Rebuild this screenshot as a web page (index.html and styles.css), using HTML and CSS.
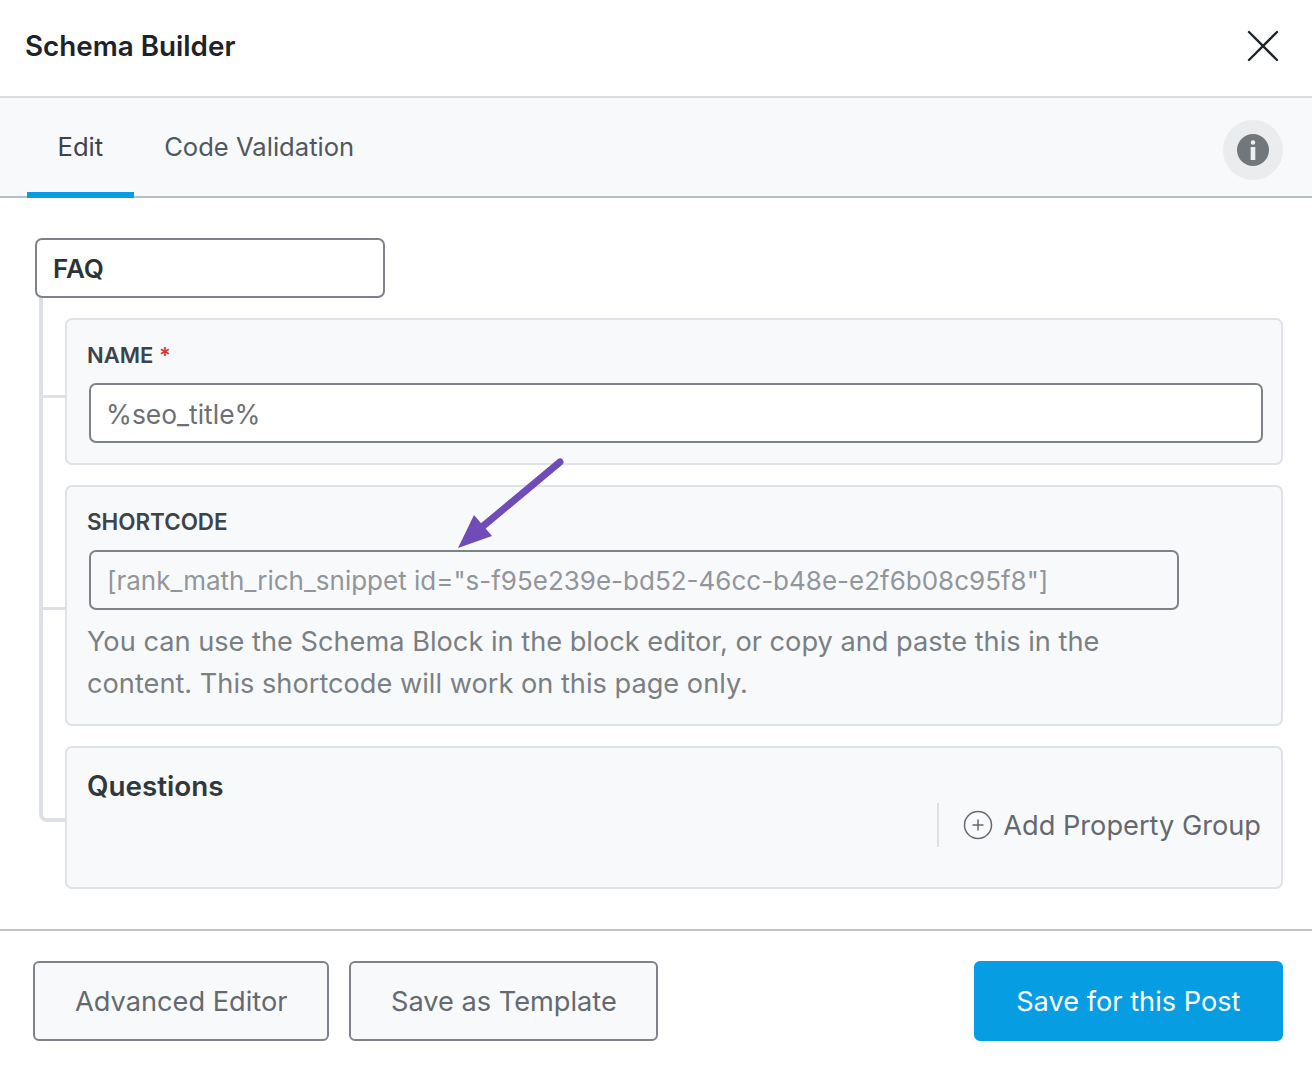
FILE: index.html
```html
<!DOCTYPE html>
<html lang="en">
<head>
<meta charset="utf-8">
<title>Schema Builder</title>
<link rel="stylesheet" href="styles.css">
</head>
<body>
<div class="modal">
  <header class="header">
    <h1 class="title">Schema Builder</h1>
    <button class="close" aria-label="Close">
      <svg width="32" height="32" viewBox="0 0 32 32"><path d="M2 2 L30 30 M30 2 L2 30" fill="none" stroke="#1d2327" stroke-width="2.4" stroke-linecap="round"/></svg>
    </button>
  </header>
  <nav class="tabs">
    <a class="tab tab-active">Edit</a>
    <a class="tab">Code Validation</a>
    <span class="info">
      <svg width="32" height="32" viewBox="0 0 32 32"><circle cx="16" cy="16" r="16" fill="#72777c"/><circle cx="16" cy="8.5" r="2.2" fill="#f0f0f1"/><rect x="13.7" y="13" width="4.6" height="13" fill="#f0f0f1"/></svg>
    </span>
  </nav>
  <main class="main">
    <div class="schema-name">FAQ</div>
    <div class="fields">
      <section class="card card-name">
        <label class="label">NAME <span class="req">*</span></label>
        <div class="input input-name">%seo_title%</div>
      </section>
      <section class="card card-short">
        <label class="label label-short">SHORTCODE</label>
        <div class="input input-short">[rank_math_rich_snippet id="s-f95e239e-bd52-46cc-b48e-e2f6b08c95f8"]</div>
        <p class="help">You can use the Schema Block in the block editor, or copy and paste this in the content. This shortcode will work on this page only.</p>
        <svg class="arrow" width="112" height="96" viewBox="0 0 112 96"><path d="M105 5 L27 70" fill="none" stroke="#6f4cb8" stroke-width="7" stroke-linecap="round"/><path d="M3 91 L19 58 L37 79 Z" fill="#6f4cb8"/></svg>
      </section>
      <section class="card card-questions">
        <h2 class="q-title">Questions</h2>
        <div class="add-wrap">
          <button class="add">
            <svg width="30" height="30" viewBox="0 0 30 30"><circle cx="15" cy="15" r="13.5" fill="none" stroke="#646970" stroke-width="1.5"/><path d="M15 9.5 V20.5 M9.5 15 H20.5" fill="none" stroke="#646970" stroke-width="1.5"/></svg>
            <span>Add Property Group</span>
          </button>
        </div>
      </section>
    </div>
  </main>
  <footer class="footer">
    <button class="btn btn-advanced">Advanced Editor</button>
    <button class="btn btn-template">Save as Template</button>
    <button class="btn btn-primary">Save for this Post</button>
  </footer>
</div>
</body>
</html>
```

FILE: styles.css
```css
* { box-sizing: border-box; }
html, body { margin: 0; padding: 0; background: #fff; }
body { font-family: Inter, "Liberation Sans", sans-serif; color: #3c434a; }
.modal { width: 1312px; height: 1086px; display: flex; flex-direction: column; }

.header { height: 98px; border-bottom: 2px solid #dcdde1; display: flex; align-items: center; justify-content: space-between; padding: 0 33px 4px 25px; }
.title { margin: 0; font-size: 27.8px; font-weight: 600; color: #1d2327; line-height: 32px; }
.close { padding: 0; border: 0; background: none; width: 32px; height: 32px; display: block; }
.close svg { display: block; }

.tabs { height: 100px; background: #f8f9fa; border-bottom: 2px solid #b5bfc9; display: flex; align-items: stretch; padding: 0 29px 0 27px; }
.tab { font-size: 25.6px; color: #50575e; padding: 2px 30.5px 0; display: flex; align-items: center; margin-bottom: -2px; border-bottom: 6px solid transparent; }
.tab-active { color: #3c434a; border-bottom-color: #069de3; }
.info { margin-left: auto; align-self: center; margin-top: 6px; width: 60px; height: 60px; border-radius: 50%; background: #ebecee; display: flex; align-items: center; justify-content: center; }
.info svg { display: block; }

.main { flex: 1; padding: 40px 29px 0 35px; }
.schema-name { width: 350px; height: 60px; border: 2px solid #7f8389; border-radius: 7px; font-size: 26px; font-weight: 600; color: #2c3338; display: flex; align-items: center; padding: 0 16px; background: #fff; }

.fields { position: relative; margin: 0 0 0 4px; padding: 20px 0 0 26px; display: flex; flex-direction: column; gap: 20px; }
.fields::before { content: ""; position: absolute; left: 0; top: 0; bottom: 67px; width: 26px; border-left: 4px solid #dde1e5; border-bottom: 4px solid #dde1e5; border-bottom-left-radius: 8px; }

.card { position: relative; background: #f8f9fa; border: 2px solid #dfe2e6; border-radius: 7px; padding: 0 20px; }
.card-name { height: 147px; padding-top: 20px; }
.card-short { height: 241px; padding-top: 20px; }
.card-questions { height: 143px; padding-top: 20px; }
.card-name::before, .card-short::before { content: ""; position: absolute; left: -24px; width: 24px; height: 3px; background: #dde1e5; }
.card-name::before { top: 75px; }
.card-short::before { top: 120px; }

.label { display: block; font-size: 22px; font-weight: 600; line-height: 30px; color: #3c434a; }
.label-short { font-size: 22.4px; }
.req { color: #d63638; }
.input { margin: 13px 0 0 2px; height: 60px; border: 2px solid #7f8389; border-radius: 7px; background: #fff; display: flex; align-items: center; padding: 0 16px; font-size: 26px; color: #6b7075; }
.input-name { margin-right: -2px; padding: 2px 14px 0 15px; font-size: 26.4px; }
.input-short { width: 1090px; background: #f8f9fa; color: #92959a; }
.help { margin: 11px 0 0; font-size: 27.2px; line-height: 42px; color: #7a7f84; max-width: 1040px; }
.arrow { position: absolute; left: 388px; top: -30px; }

.q-title { margin: 0; font-size: 27.8px; font-weight: 600; line-height: 36px; color: #32373c; }
.add-wrap { position: absolute; right: 20px; top: 55px; height: 44px; border-left: 2px solid #dcdfe3; padding-left: 24px; display: flex; align-items: center; }
.add { border: 0; background: none; padding: 0; font: inherit; font-size: 27.2px; color: #646970; display: flex; align-items: center; gap: 10px; }
.add svg { display: block; }

.footer { height: 157px; border-top: 2px solid #bfc3c7; display: flex; align-items: flex-start; gap: 20px; padding: 30px 29px 0 33px; }
.btn { height: 80px; padding: 0 40px; border: 2px solid #7f8389; border-radius: 6px; background: #f8f9fa; color: #646970; font-family: inherit; font-size: 27.2px; }
.btn-template { padding: 0 39.5px; }
.btn-primary { margin-left: auto; padding: 0 40.5px; background: #069de3; border-color: #069de3; color: #fff; }
```
